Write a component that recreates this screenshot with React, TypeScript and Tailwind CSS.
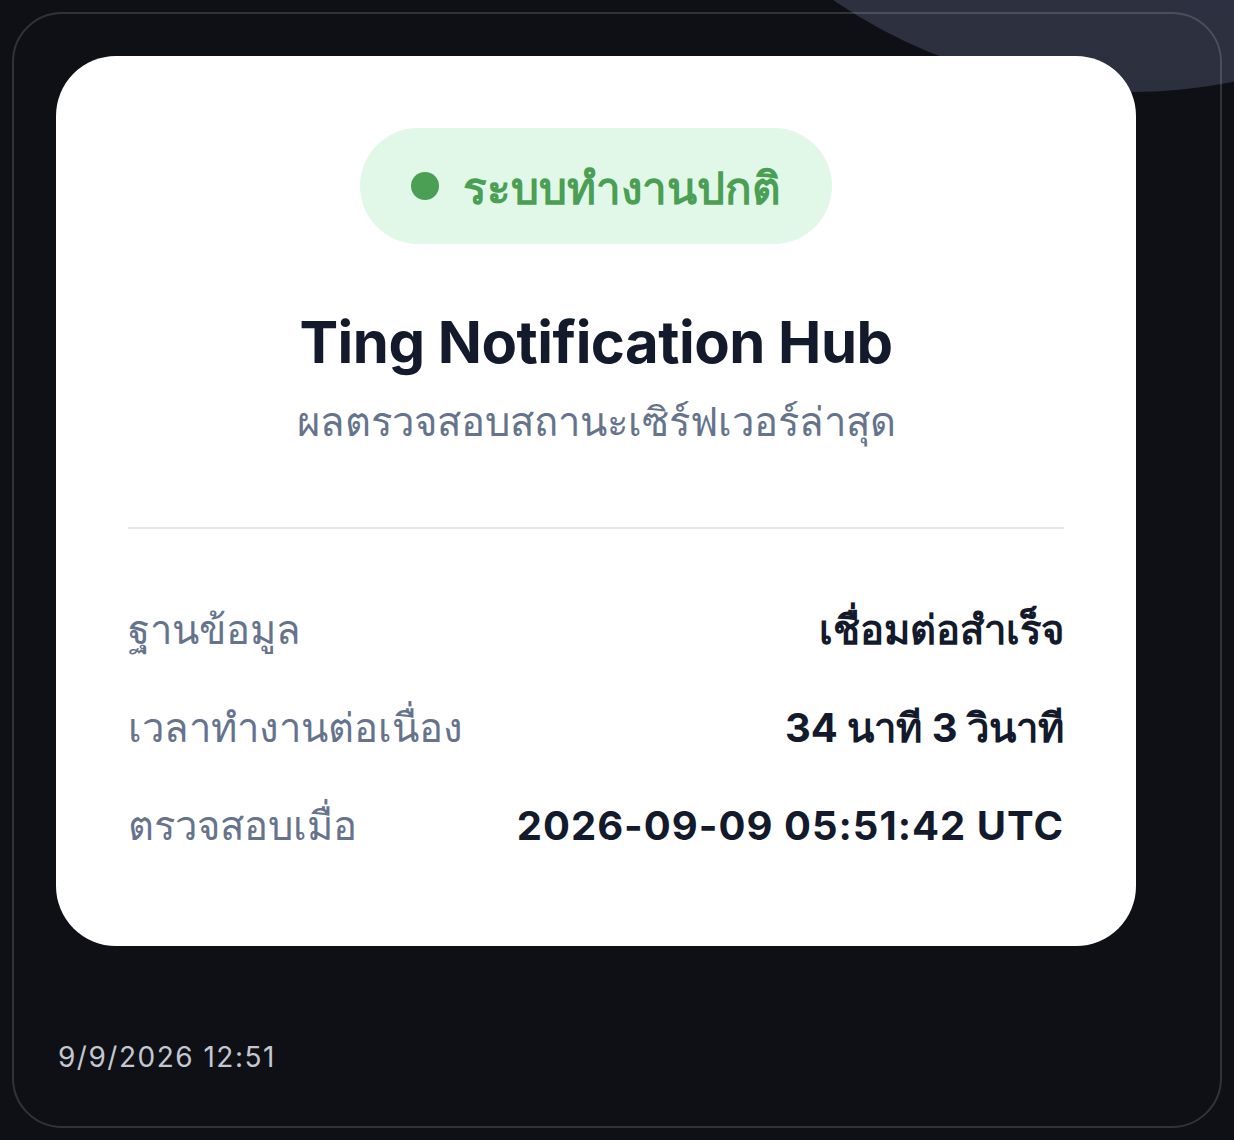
export default function App() {
  const rows = [
    { label: "ฐานข้อมูล", value: "เชื่อมต่อสำเร็จ", wide: false },
    { label: "เวลาทำงานต่อเนื่อง", value: "34 นาที 3 วินาที", wide: false },
    { label: "ตรวจสอบเมื่อ", value: "2026-09-09 05:51:42 UTC", wide: true },
  ];

  return (
    <div
      className="relative h-[1140px] w-full overflow-hidden bg-[#0e1016] p-[12px]"
      style={{ fontFamily: "Inter, 'Noto Sans', 'DejaVu Sans', sans-serif" }}
    >
      {/* decorative blob, top right */}
      <div className="absolute left-[605px] top-[-958px] h-[1050px] w-[1050px] rounded-full bg-gradient-to-b from-[#363b50] to-[#2c2f3e]" />

      <div className="relative flex h-full flex-col rounded-[50px] border-2 border-white/15 px-[42px] pt-[42px]">
        <div className="flex h-[890px] w-[1080px] flex-col rounded-[60px] bg-white px-[72px] pt-[72px]">
          <div className="flex justify-center">
            <div className="flex h-[116px] items-center gap-[24px] rounded-full bg-[#e1f8e8] px-[51px]">
              <span className="h-[28px] w-[28px] rounded-full bg-[#4b9f55]" />
              <span className="pt-[4px] text-[44px] font-bold text-[#4b9f55]">ระบบทำงานปกติ</span>
            </div>
          </div>

          <h1 className="mt-[62px] text-center text-[58px] font-bold leading-[72px] tracking-[-0.5px] text-[#131a2c]">
            Ting Notification Hub
          </h1>
          <p className="mt-[18px] text-center text-[40px] leading-[52px] text-[#66738c]">
            ผลตรวจสอบสถานะเซิร์ฟเวอร์ล่าสุด
          </p>

          <div className="mt-[79px] h-[2px] bg-[#e4e7ec]" />

          <div className="mt-[75px] flex flex-col gap-[46px]">
            {rows.map((r) => (
              <div key={r.label} className="flex items-center justify-between leading-[52px]">
                <span className="text-[40px] text-[#66738c]">{r.label}</span>
                <span
                  className={
                    r.wide
                      ? "text-[40px] font-bold tracking-[1px] text-[#131a2c]"
                      : "text-[40px] font-bold text-[#131a2c]"
                  }
                >
                  {r.value}
                </span>
              </div>
            ))}
          </div>
        </div>

        <div className="mt-[90px] pl-[2px] text-[28px] tracking-[1.5px] text-[#c3c7d0]">9/9/2026 12:51</div>
      </div>
    </div>
  );
}
